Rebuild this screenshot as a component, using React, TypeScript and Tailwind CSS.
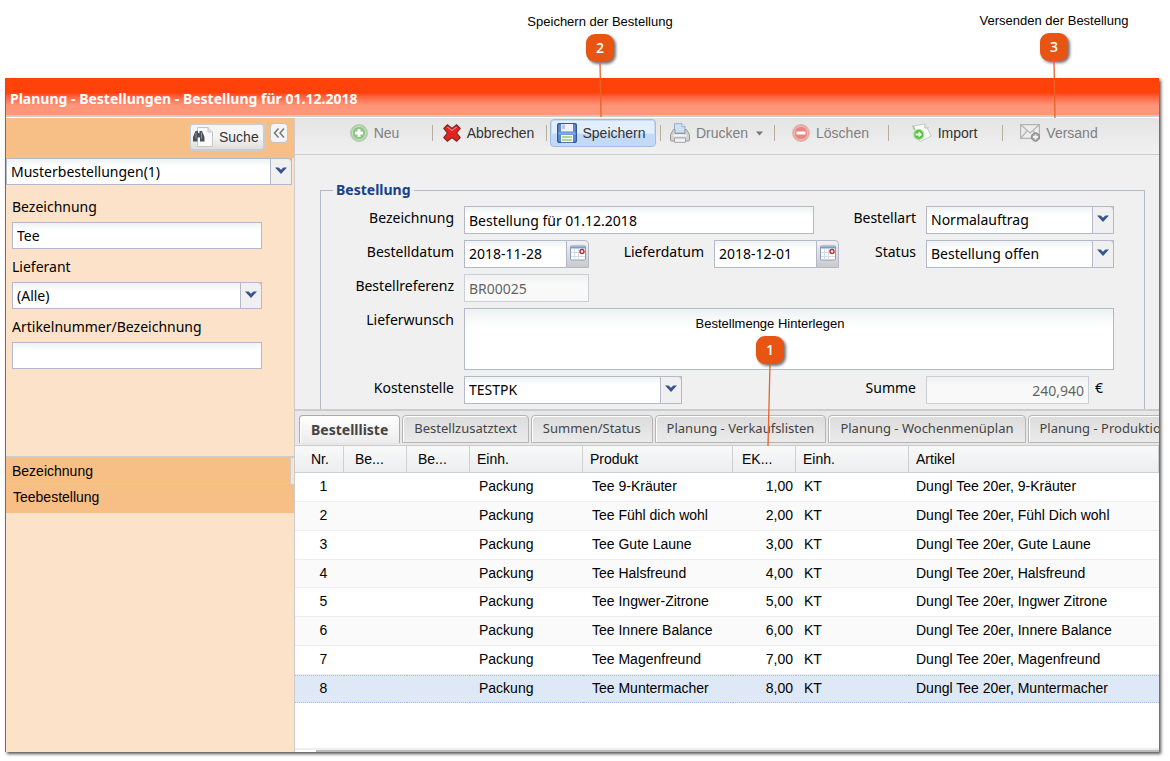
import { useState } from "react";
import type { ReactNode } from "react";
import clsx from "clsx";

const ui = "font-['Noto_Sans','DejaVu_Sans_Condensed',sans-serif]";
const arial = "font-['Liberation_Sans',Arial,sans-serif]";

const box =
  "border border-[#b5b8c8] bg-white bg-linear-to-b from-[#eef2f3] from-0% to-white to-30% text-sm text-black outline-none rounded-none";

const tabs = [
  "Bestellliste",
  "Bestellzusatztext",
  "Summen/Status",
  "Planung - Verkaufslisten",
  "Planung - Wochenmenüplan",
  "Planung - Produktion",
];

const columns = [
  { title: "Nr.", width: "w-[49px]", pad: "pl-4" },
  { title: "Be...", width: "w-[63px]", pad: "pl-[11px]" },
  { title: "Be...", width: "w-[63px]", pad: "pl-[11px]" },
  { title: "Einh.", width: "w-[113px]", pad: "pl-[7px]" },
  { title: "Produkt", width: "w-[150px]", pad: "pl-[7px]" },
  { title: "EK...", width: "w-[63px]", pad: "pl-[9px]" },
  { title: "Einh.", width: "w-[113px]", pad: "pl-[7px]" },
  { title: "Artikel", width: "", pad: "pl-[7px]" },
];

const rows = [
  { product: "Tee 9-Kräuter", amount: "1,00", article: "Dungl Tee 20er, 9-Kräuter" },
  { product: "Tee Fühl dich wohl", amount: "2,00", article: "Dungl Tee 20er, Fühl Dich wohl" },
  { product: "Tee Gute Laune", amount: "3,00", article: "Dungl Tee 20er, Gute Laune" },
  { product: "Tee Halsfreund", amount: "4,00", article: "Dungl Tee 20er, Halsfreund" },
  { product: "Tee Ingwer-Zitrone", amount: "5,00", article: "Dungl Tee 20er, Ingwer Zitrone" },
  { product: "Tee Innere Balance", amount: "6,00", article: "Dungl Tee 20er, Innere Balance" },
  { product: "Tee Magenfreund", amount: "7,00", article: "Dungl Tee 20er, Magenfreund" },
  { product: "Tee Muntermacher", amount: "8,00", article: "Dungl Tee 20er, Muntermacher" },
];

/* Icons */

function AddIcon() {
  return (
    <svg width="18" height="18" viewBox="0 0 18 18">
      <circle cx="9" cy="9" r="8.5" fill="#a9cfa0" stroke="#b9cdb4" />
      <circle cx="9" cy="9" r="6.6" fill="#8fc584" stroke="#c9e4c2" />
      <path d="M9 5v8M5 9h8" stroke="#fff" strokeWidth="2.8" />
    </svg>
  );
}

function CancelIcon() {
  return (
    <svg width="18" height="18" viewBox="0 0 18 18">
      <path
        d="M4.300 .8 9 4.400 13.700.8 17.200 4.300 13.600 9l3.600 4.700-3.500 3.500L9 13.600l-4.700 3.600L.8 13.700 4.400 9 .8 4.300z"
        fill="#e32222"
        stroke="#7c2626"
        strokeWidth="1.2"
        strokeLinejoin="round"
      />
      <path d="M4.500 3 9 6.600 13.500 3" fill="none" stroke="#f27a7a" strokeWidth="1.2" />
    </svg>
  );
}

function SaveIcon() {
  return (
    <svg width="20" height="20" viewBox="0 0 20 20">
      <rect x=".6" y=".6" width="18.8" height="18.8" rx="1.4" fill="#5b8ad4" stroke="#2f579f" strokeWidth="1.2" />
      <path d="M4 1h12v7.5H4z" fill="#eef3fb" />
      <path d="M5 1.5h3V6H5z" fill="#b4c8e8" />
      <path d="M1.5 9.5h17v2h-17z" fill="#86aae4" />
      <path d="M4 12h12v7.2H4z" fill="#f7faf4" />
      <path d="M5 14h10M5 17h10" stroke="#93cf6c" strokeWidth="1.6" />
    </svg>
  );
}

function PrintIcon() {
  return (
    <svg width="20" height="20" viewBox="0 0 20 20">
      <path d="M4.500.7H12l3 3V10H4.500z" fill="#cfe0f1" stroke="#8fb0d2" />
      <path d="M12 .7v3h3" fill="#fff" stroke="#8fb0d2" />
      <path
        d="M3.500 6.500h1.500v4h10v-4h1.500l3 5V17q0 1-1 1h-17q-1 0-1-1v-5.500z"
        fill="#d2d2d4"
        stroke="#98989c"
        strokeLinejoin="round"
      />
      <path d="M3.500 12.500h13" stroke="#f6f6f6" strokeWidth="2" />
      <path d="M4.500 15h11v4.300h-11z" fill="#f3f3f3" stroke="#a5a5a8" />
    </svg>
  );
}

function DeleteIcon() {
  return (
    <svg width="18" height="18" viewBox="0 0 18 18">
      <circle cx="9" cy="9" r="8.4" fill="#eba39d" stroke="#ddb4b0" />
      <circle cx="9" cy="9" r="6.6" fill="#e98680" stroke="#f3bdb8" />
      <path d="M4.5 9h9" stroke="#fff" strokeWidth="3" />
    </svg>
  );
}

function ImportIcon() {
  return (
    <svg width="20" height="20" viewBox="0 0 20 20">
      <path d="M1.500 3 13 .8 19.300 13 8 18.800z" fill="#fafafa" stroke="#c9c9c9" />
      <path d="M13 .8 12.800 5l4-.2" fill="#e2e2e2" stroke="#c0c0c0" />
      <path d="M.8 2.500 2.600 7" stroke="#9fcf83" strokeWidth="1.6" />
      <circle cx="6.800" cy="11.500" r="5" fill="#4cc23a" stroke="#a5e094" strokeWidth="1.2" />
      <path d="M3.600 10.400h3V8.300l3.600 3.200-3.600 3.200v-2.100h-3z" fill="#fff" />
    </svg>
  );
}

function MailIcon() {
  return (
    <svg width="20" height="18" viewBox="0 0 20 18">
      <path d="M.6.6h18.8v13.8H.6z" fill="#ededed" stroke="#b3b3b3" strokeWidth="1.2" />
      <path d="m1 1 9 8 9-8M1 14l6-7.3M19 14l-6-7.3" fill="none" stroke="#b3b3b3" strokeWidth="1.2" />
      <circle cx="15.5" cy="13" r="4.2" fill="#a2a2a2" stroke="#8d8d8d" />
      <path d="M15.5 10.5v5M13 13h5" stroke="#f2f2f2" strokeWidth="1.8" />
    </svg>
  );
}

function SearchIcon() {
  return (
    <svg width="20" height="20" viewBox="0 0 20 20">
      <path d="M4.5.5H15l4.5 4.5v14.5h-15z" fill="#fafafa" stroke="#c3c6c8" />
      <path d="M15 .5V5h4.5" fill="#e6e6e6" stroke="#c3c6c8" />
      <path d="M2.500 4H5v2h1.500V4H9l2.500 6v4.500H7v-4H4.500v4H0V10z" fill="#4a5258" />
      <path d="M3 5.500v6M8.500 5.500v6" stroke="#87929a" />
    </svg>
  );
}

function CalendarIcon() {
  return (
    <svg width="16" height="16" viewBox="0 0 16 16">
      <rect x=".5" y="1" width="15" height="14" rx="1" fill="#fff" stroke="#7f9cc4" />
      <path d="M.5 1.5h15v2H.5z" fill="#7f9cc4" />
      <path d="M4.5 4v11M8.5 4v11M1 7.5h14M1 11.5h14" stroke="#d8dce4" />
      <circle cx="12" cy="6.5" r="2" fill="#fff" stroke="#b32e34" strokeWidth="1.4" />
    </svg>
  );
}

function Chevron() {
  return (
    <svg width="12" height="8" viewBox="0 0 12 8">
      <path d="M0 .5h3.6L6 2.8 8.4.5H12L6 7z" fill="#39558f" />
    </svg>
  );
}

/* Form controls */

interface ComboProps {
  id: string;
  value: string;
  className?: string;
  label?: string;
}

function Combo({ id, value, className, label }: ComboProps) {
  return (
    <div className={clsx("relative", className)}>
      <select
        id={id}
        aria-label={label}
        defaultValue={value}
        className={clsx(box, "block h-full w-full appearance-none pl-1 pr-6")}
      >
        <option>{value}</option>
      </select>
      <span className="pointer-events-none absolute inset-y-0 right-0 flex w-[22px] items-center justify-center rounded-tr-sm border border-[#b5b8c8] bg-[#f0f0f0] pb-0.5">
        <Chevron />
      </span>
    </div>
  );
}

function DateField({ id, value }: { id: string; value: string }) {
  return (
    <div className="flex h-7 w-[125px]">
      <input id={id} defaultValue={value} className={clsx(box, "w-[102px] border-r-0 pl-1")} />
      <button
        type="button"
        aria-label="Kalender"
        className="flex w-[23px] items-start justify-center rounded-tr-sm border border-[#b5b8c8] bg-linear-to-b from-[#f2f2f2] to-[#cacaca] pt-1"
      >
        <CalendarIcon />
      </button>
    </div>
  );
}

function FieldLabel({ htmlFor, className, children }: { htmlFor: string; className?: string; children: ReactNode }) {
  return (
    <label htmlFor={htmlFor} className={clsx("mr-2.5 pt-0.5 text-right text-sm leading-5", className)}>
      {children}
    </label>
  );
}

interface ToolProps {
  icon: ReactNode;
  children: ReactNode;
  disabled?: boolean;
  active?: boolean;
  last?: boolean;
  menu?: boolean;
}

function Tool({ icon, children, disabled, active, last, menu }: ToolProps) {
  return (
    <div className="flex w-[114px] shrink-0 items-center">
      <div className="flex flex-1 justify-center pr-0.5">
        <button
          type="button"
          disabled={disabled}
          className={clsx(
            "flex h-7 items-center gap-1.5 rounded-sm border text-sm",
            active
              ? "w-[106px] justify-start border-[#9ebae1] bg-linear-to-b from-[#e4effd] from-50% to-[#c2daf8] to-55% pl-1.5 shadow-[inset_0_0_0_1px_#c5dcf8]"
              : "justify-center border-transparent",
            disabled ? "text-[#808080]" : "text-[#333]",
          )}
        >
          {icon}
          {children}
          {menu && (
            <svg width="7" height="5" viewBox="0 0 7 5" className="ml-0.5">
              <path d="M0 .5h7L3.5 4.5z" fill="#777" />
            </svg>
          )}
        </button>
      </div>
      {!last && <span className="h-4 w-px bg-[#b5af9c]" />}
    </div>
  );
}

function Sidebar() {
  return (
    <aside className="flex w-[289px] shrink-0 flex-col border-r border-[#ccc] bg-[#fce2c9]">
      <div className="flex h-10 items-start justify-end gap-[5px] bg-[#f7be86] pr-1.5 pt-[5px]">
        <button
          type="button"
          className={clsx(
            arial,
            "flex h-7 w-[76px] items-center gap-1.5 rounded-sm border-2 border-[#c9cdd1] bg-linear-to-b from-[#f5f5f5] from-50% to-[#dedede] pl-0.5 text-sm text-[#333]",
          )}
        >
          <SearchIcon />
          Suche
        </button>
        <button
          type="button"
          aria-label="Einklappen"
          className="flex h-5 w-[18px] items-center justify-center rounded-sm border border-[#c4c4c4] bg-[#f4f4f4]"
        >
          <svg width="12" height="10" viewBox="0 0 12 10" fill="none" stroke="#777" strokeWidth="1.5">
            <path d="M5.5 .5 1.5 5l4 4.500M11 .5 7 5l4 4.500" />
          </svg>
        </button>
      </div>
      <Combo id="vorlage" label="Vorlage" value="Musterbestellungen(1)" className="mr-0.5 h-[27px]" />

      <div className="flex flex-col gap-2 pl-1.5 pr-8 pt-3">
        <div>
          <label htmlFor="suche-bezeichnung" className="mb-[5px] block text-sm leading-5">Bezeichnung</label>
          <input id="suche-bezeichnung" defaultValue="Tee" className={clsx(box, "block h-[27px] w-full px-1")} />
        </div>
        <div>
          <label htmlFor="suche-lieferant" className="mb-[5px] block text-sm leading-5">Lieferant</label>
          <Combo id="suche-lieferant" value="(Alle)" className="h-[27px]" />
        </div>
        <div>
          <label htmlFor="suche-artikel" className="mb-[5px] block text-sm leading-5">Artikelnummer/Bezeichnung</label>
          <input id="suche-artikel" className={clsx(box, "block h-[27px] w-full px-1")} />
        </div>
      </div>

      <table className={clsx(arial, "mt-[87px] w-full border-separate border-spacing-0 border-t-2 border-[#ccc] text-left text-sm")}>
        <thead>
          <tr>
            <th className="h-[26px] border-b border-r border-[#ccc] bg-[#f7be86] pl-1.5 font-normal">
              Bezeichnung
            </th>
            <th className="w-[3px]" />
          </tr>
        </thead>
        <tbody>
          <tr>
            <td colSpan={2} className="h-[29px] bg-[#f7be86] pb-1 pl-[7px]">Teebestellung</td>
          </tr>
        </tbody>
      </table>
    </aside>
  );
}

function Toolbar() {
  return (
    <div className={clsx(arial, "flex h-[37px] items-start overflow-hidden border-b border-[#ccc] bg-linear-to-b from-[#e4e4e4] to-[#f1f1f1] pl-6 pt-px")}>
      <Tool icon={<AddIcon />} disabled>Neu</Tool>
      <Tool icon={<CancelIcon />}>Abbrechen</Tool>
      <Tool icon={<SaveIcon />} active>Speichern</Tool>
      <Tool icon={<PrintIcon />} disabled menu>Drucken</Tool>
      <Tool icon={<DeleteIcon />} disabled>Löschen</Tool>
      <Tool icon={<ImportIcon />}>Import</Tool>
      <Tool icon={<MailIcon />} disabled last>Versand</Tool>
    </div>
  );
}

function OrderForm() {
  return (
    <form className="bg-[#f0f0f0] pl-[25px] pr-3.5 pt-[25px]">
      <fieldset className="border border-b-0 border-[#b5b8c8] pb-[5px] pr-[30px]">
        <legend className="ml-3 px-[3px] text-sm font-bold leading-5 text-[#15428b]">Bestellung</legend>
        <div className="mt-1.5 flex flex-col gap-1.5">
          <div className="flex">
            <FieldLabel htmlFor="bezeichnung" className="w-[133px]">Bezeichnung</FieldLabel>
            <input id="bezeichnung" defaultValue="Bestellung für 01.12.2018" className={clsx(box, "h-7 w-[350px] px-1")} />
            <FieldLabel htmlFor="bestellart" className="ml-auto">Bestellart</FieldLabel>
            <Combo id="bestellart" value="Normalauftrag" className="h-7 w-[188px]" />
          </div>
          <div className="flex">
            <FieldLabel htmlFor="bestelldatum" className="w-[133px]">Bestelldatum</FieldLabel>
            <DateField id="bestelldatum" value="2018-11-28" />
            <FieldLabel htmlFor="lieferdatum" className="w-[115px]">Lieferdatum</FieldLabel>
            <DateField id="lieferdatum" value="2018-12-01" />
            <FieldLabel htmlFor="status" className="ml-auto">Status</FieldLabel>
            <Combo id="status" value="Bestellung offen" className="h-7 w-[188px]" />
          </div>
          <div className="flex">
            <FieldLabel htmlFor="referenz" className="w-[133px]">Bestellreferenz</FieldLabel>
            <input id="referenz" disabled defaultValue="BR00025" className={clsx(box, "h-7 w-[125px] px-1 opacity-60")} />
          </div>
          <div className="flex">
            <FieldLabel htmlFor="lieferwunsch" className="w-[133px]">Lieferwunsch</FieldLabel>
            <textarea id="lieferwunsch" className={clsx(box, "h-[62px] flex-1 resize-none px-1")} />
          </div>
          <div className="flex">
            <FieldLabel htmlFor="kostenstelle" className="w-[133px]">Kostenstelle</FieldLabel>
            <Combo id="kostenstelle" value="TESTPK" className="h-7 w-[218px]" />
            <FieldLabel htmlFor="summe" className="ml-auto">Summe</FieldLabel>
            <div className="flex w-[188px] gap-1.5">
              <input id="summe" disabled defaultValue="240,940" className={clsx(box, "h-7 w-[163px] px-1 text-right opacity-60")} />
              <span className="pt-0.5 text-sm leading-5">€</span>
            </div>
          </div>
        </div>
      </fieldset>
    </form>
  );
}

function OrderTabs() {
  const [active, setActive] = useState(0);

  return (
    <div role="tablist" className="flex h-[37px] items-start gap-0.5 overflow-hidden border-b border-t-2 border-[#ccc] bg-[#e8e8e8] pl-1 pt-1">
      {tabs.map((tab, i) => (
        <button
          key={tab}
          type="button"
          role="tab"
          aria-selected={i === active}
          onClick={() => setActive(i)}
          className={clsx(
            "h-7 shrink-0 whitespace-nowrap rounded-t border px-[11px] text-[#444] shadow-[inset_1px_1px_0_#fff]",
            i === active
              ? "border-b-0 border-[#aaa] bg-linear-to-b from-white to-[#ececec] text-sm font-bold"
              : "border-[#b5b5b5] bg-linear-to-b from-[#dcdcdc] to-[#ebebeb] text-[13px]",
          )}
        >
          {tab}
        </button>
      ))}
    </div>
  );
}

function OrderTable() {
  const [selected, setSelected] = useState(7);

  return (
    <table className={clsx(arial, "w-full table-fixed border-separate border-spacing-0 text-left text-sm text-black")}>
      <thead>
        <tr className="bg-linear-to-b from-[#f9f9f9] to-[#ebedef]">
          {columns.map((col, i) => (
            <th
              key={i}
              className={clsx("h-[27px] border-b border-r border-[#d0d0d0] font-normal", col.width, col.pad)}
            >
              {col.title}
            </th>
          ))}
        </tr>
      </thead>
      <tbody>
        {rows.map((row, i) => (
          <tr
            key={row.product}
            onClick={() => setSelected(i)}
            className={clsx(
              "[&>td]:whitespace-nowrap [&>td]:pb-0.5",
              i % 4 === 3 ? "[&>td]:h-7" : "[&>td]:h-[29px]",
              i === selected
                ? "bg-[#dfe8f6] [&>td]:border-y [&>td]:border-dotted [&>td]:border-[#a3bae9]"
                : "[&>td]:border-b [&>td]:border-[#ededed]",
              i !== selected && i % 2 === 1 && "bg-[#fafafa]",
            )}
          >
            <td className="pl-2 text-center">{i + 1}</td>
            <td />
            <td />
            <td className="pl-[9px]">Packung</td>
            <td className="pl-[9px]">{row.product}</td>
            <td className="pr-[3px] text-right">{row.amount}</td>
            <td className="pl-2">KT</td>
            <td className="pl-[7px]">{row.article}</td>
          </tr>
        ))}
      </tbody>
    </table>
  );
}

interface CalloutProps {
  n: number;
  text: string;
  place: string;
  length: number;
  drift: number;
}

// Numbered marker with a pointer line that ends on the explained control
function Callout({ n, text, place, length, drift }: CalloutProps) {
  return (
    <div className={clsx(arial, "pointer-events-none absolute flex w-[160px] flex-col items-center text-[13px] leading-4 text-black", place)}>
      <span className="whitespace-nowrap">{text}</span>
      <span className="mt-1 flex size-7 items-center justify-center rounded-[9px] bg-[#e85412] font-['Open_Sans',sans-serif] text-sm font-semibold text-white shadow-[2px_2px_3px_rgba(0,0,0,0.55)]">
        {n}
      </span>
      <svg width="12" height={length} className="overflow-visible">
        <line x1="6" y1="0" x2={6 + drift} y2={length} stroke="#e8622c" strokeWidth="1.3" />
      </svg>
    </div>
  );
}

export default function App() {
  return (
    <div className={clsx(ui, "relative flex min-h-screen flex-col bg-white pb-[9px] pl-[5px] pr-[11px] pt-[78px] text-black")}>
      <div className="flex flex-1 flex-col overflow-hidden border-l border-[#2f7fc4] shadow-[2px_2px_3px_#555]">
        <header className="flex h-[37px] items-center bg-linear-to-b from-[#ff420a] from-40% to-[#ff967a] to-75% pl-1 pt-1">
          <h1 className="text-sm font-bold text-white">Planung - Bestellungen - Bestellung für 01.12.2018</h1>
        </header>
        <div className="flex flex-1 border-t-2 border-[#ccc] bg-white pt-px">
          <Sidebar />
          <main className="flex min-w-0 flex-1 flex-col bg-white">
            <Toolbar />
            <OrderForm />
            <OrderTabs />
            <OrderTable />
            <div className="mt-auto border-t-2 border-[#eee] pl-[21px]">
              <div className="h-0.5 bg-[#bbb]" />
            </div>
          </main>
        </div>
      </div>

      <Callout n={2} text="Speichern der Bestellung" place="left-[520px] top-[14px]" length={55} drift={1} />
      <Callout n={3} text="Versenden der Bestellung" place="left-[974px] top-[13px]" length={57} drift={1} />
      <Callout n={1} text="Bestellmenge Hinterlegen" place="left-[690px] top-[316px]" length={82} drift={-2} />
    </div>
  );
}
